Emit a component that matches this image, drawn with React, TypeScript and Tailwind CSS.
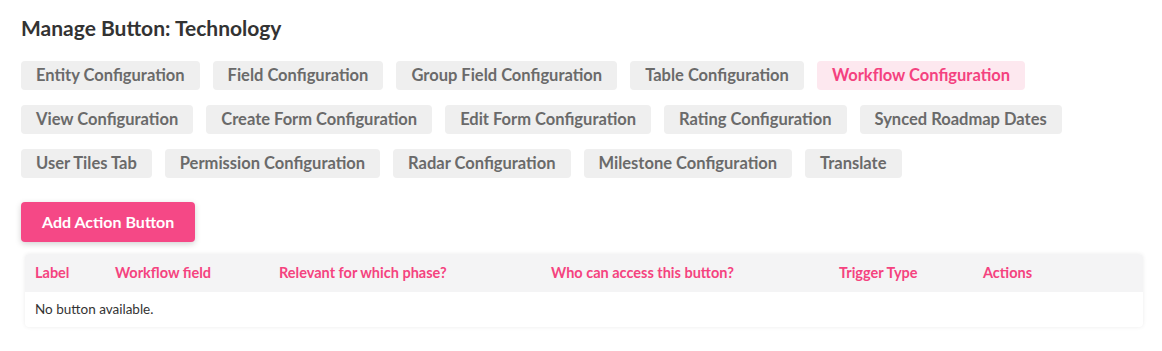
const tabs = [
  "Entity Configuration",
  "Field Configuration",
  "Group Field Configuration",
  "Table Configuration",
  "Workflow Configuration",
  "View Configuration",
  "Create Form Configuration",
  "Edit Form Configuration",
  "Rating Configuration",
  "Synced Roadmap Dates",
  "User Tiles Tab",
  "Permission Configuration",
  "Radar Configuration",
  "Milestone Configuration",
  "Translate",
];

const columns = [
  "Label",
  "Workflow field",
  "Relevant for which phase?",
  "Who can access this button?",
  "Trigger Type",
  "Actions",
];

export default function App() {
  const active = "Workflow Configuration";
  return (
    <div className="min-h-[351px] bg-white pl-[21px] pr-[19px] pt-[14px] font-['Lato',sans-serif]">
      <h1 className="text-[21px] font-bold leading-[28px] text-[#333]">Manage Button: Technology</h1>

      <div className="mt-[19px] flex flex-wrap gap-x-[13px] gap-y-[15px] pr-[2px]">
        {tabs.map((t) => (
          <button
            key={t}
            className={
              t === active
                ? "h-[29px] rounded-[4px] bg-[#fde8ef] px-[15px] text-[16.5px] font-bold text-[#f4427f]"
                : "h-[29px] rounded-[4px] bg-[#efefef] px-[15px] text-[16.5px] font-bold text-[#6a6a6a]"
            }
          >
            {t}
          </button>
        ))}
      </div>

      <button className="mt-[24px] h-[40px] rounded-[4px] bg-[#f54886] px-[21px] text-[16px] font-bold text-white shadow-[0_2px_6px_rgba(0,0,0,0.18)]">
        Add Action Button
      </button>

      <div className="ml-[4px] mt-[12px] rounded-[4px] bg-white shadow-[0_0_4px_rgba(0,0,0,0.08)]">
        <div className="grid h-[38px] grid-cols-[80px_164px_272px_288px_144px_1fr] items-center rounded-t-[4px] bg-[#f4f4f5] pl-[10px] text-[14.5px] font-bold text-[#f5437f]">
          {columns.map((c) => (
            <div key={c}>{c}</div>
          ))}
        </div>
        <div className="flex h-[35px] items-center pl-[10px] text-[13.5px] text-[#333]">No button available.</div>
      </div>
    </div>
  );
}
